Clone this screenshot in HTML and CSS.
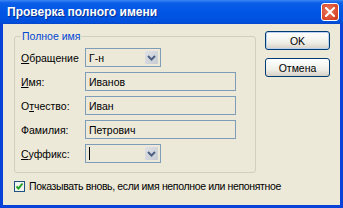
FILE: index.html
```html
<!DOCTYPE html>
<html lang="ru">
<head>
<meta charset="utf-8">
<title>Проверка полного имени</title>
<link rel="stylesheet" href="styles.css">
</head>
<body>
<div class="window">
  <div class="titlebar">
    <span class="title">Проверка полного имени</span>
    <span class="close">
      <svg width="10" height="10" viewBox="0 0 10 10"><path d="M1 1 L9 9 M9 1 L1 9" stroke="#fff" stroke-width="2" stroke-linecap="square"/></svg>
    </span>
  </div>
  <div class="body">
    <div class="main">
      <fieldset class="group">
        <legend class="legend">Полное имя</legend>
        <div class="rows">
          <div class="row">
            <span class="label"><u>О</u>бращение</span>
            <div class="combo"><span class="value">Г-н</span><span class="drop"><svg width="9" height="6" viewBox="0 0 9 6"><path d="M1 1 L4.5 4.5 L8 1" fill="none" stroke="#4d6185" stroke-width="2"/></svg></span></div>
          </div>
          <div class="row">
            <span class="label"><u>И</u>мя:</span>
            <div class="textbox">Иванов</div>
          </div>
          <div class="row">
            <span class="label">О<u>т</u>чество:</span>
            <div class="textbox">Иван</div>
          </div>
          <div class="row">
            <span class="label">Фамилия:</span>
            <div class="textbox">Петрович</div>
          </div>
          <div class="row">
            <span class="label"><u>С</u>уффикс:</span>
            <div class="combo"><span class="value"><span class="caret"></span></span><span class="drop"><svg width="9" height="6" viewBox="0 0 9 6"><path d="M1 1 L4.5 4.5 L8 1" fill="none" stroke="#4d6185" stroke-width="2"/></svg></span></div>
          </div>
        </div>
      </fieldset>
      <div class="buttons">
        <button class="btn btn-default">OK</button>
        <button class="btn">Отмена</button>
      </div>
    </div>
    <label class="check">
      <span class="box"><svg width="9" height="9" viewBox="0 0 9 9"><path d="M1.5 4.5 L3.5 6.5 L7.5 1.5" fill="none" stroke="#21a121" stroke-width="2"/></svg></span>
      <span class="check-text">Показывать вновь, если имя неполное или непонятное</span>
    </label>
  </div>
</div>
</body>
</html>
```

FILE: styles.css
```css
html, body {
  margin: 0;
  padding: 0;
}
body {
  width: 343px;
  height: 208px;
  overflow: hidden;
  font-family: "Liberation Sans", Arial, sans-serif;
  font-size: 10.5px;
  color: #000;
}
.window {
  width: 343px;
  height: 208px;
  display: flex;
  flex-direction: column;
  background: #0842d8;
  box-sizing: border-box;
}
.titlebar {
  height: 24px;
  flex: none;
  display: flex;
  align-items: center;
  justify-content: space-between;
  padding: 0 4px 0 7px;
  background: linear-gradient(#3b86f5 0px, #0a5ee8 3px, #0055e5 12px, #0050de 22px, #0746c8 24px);
}
.title {
  color: #fff;
  font-weight: bold;
  font-size: 12px;
  text-shadow: 1px 1px 0 #0a2f8f;
}
.close {
  width: 18px;
  height: 18px;
  box-sizing: border-box;
  border: 1px solid #fff;
  border-radius: 3px;
  background: radial-gradient(circle at 40% 40%, #ec7a5c, #d8472a 70%, #c03a20);
  display: flex;
  align-items: center;
  justify-content: center;
}
.body {
  flex: 1;
  margin: 0 3px 3px 3px;
  background: #ece9d8;
  padding: 6px 0 0 11px;
  display: flex;
  flex-direction: column;
}
.main {
  display: flex;
  align-items: flex-start;
}
.group {
  margin: 0;
  width: 242px;
  box-sizing: border-box;
  border: 1px solid #d0d0bf;
  border-radius: 3px;
  padding: 5px 0 9px 6px;
}
.legend {
  color: #0046d5;
  padding: 0 1px;
  margin-left: 0;
  line-height: 13px;
}
.rows {
  display: flex;
  flex-direction: column;
  gap: 5px;
}
.row {
  display: flex;
  align-items: center;
  height: 19px;
}
.label {
  width: 64px;
  flex: none;
}
.label u {
  text-decoration: underline;
}
.textbox {
  width: 151px;
  height: 19px;
  box-sizing: border-box;
  border: 1px solid #7f9db9;
  background: #ece9d8;
  padding-left: 3px;
  display: flex;
  align-items: center;
}
.combo {
  width: 76px;
  height: 19px;
  box-sizing: border-box;
  border: 1px solid #7f9db9;
  background: #ece9d8;
  display: flex;
  align-items: center;
  justify-content: space-between;
  padding: 0 2px 0 3px;
}
.value {
  display: flex;
  align-items: center;
}
.caret {
  width: 1px;
  height: 13px;
  background: #000;
}
.drop {
  width: 13px;
  height: 13px;
  background: linear-gradient(135deg, #dfe1e6, #c6cbd3);
  border-radius: 1px;
  display: flex;
  align-items: center;
  justify-content: center;
}
.buttons {
  display: flex;
  flex-direction: column;
  gap: 8px;
  margin-left: 9px;
  margin-top: 1px;
}
.btn {
  width: 65px;
  height: 19px;
  box-sizing: border-box;
  border: 1px solid #003c74;
  border-radius: 3px;
  background: linear-gradient(#ffffff, #f0f0ea 60%, #d6d0c5);
  font-family: "Liberation Sans", Arial, sans-serif;
  font-size: 10.5px;
  color: #000;
  padding: 0;
}
.btn-default {
  box-shadow: inset 0 0 0 1px #bcd0f0;
}
.check {
  display: flex;
  align-items: center;
  gap: 4px;
  margin-top: 7px;
  margin-left: 0;
}
.check-text {
  letter-spacing: -0.35px;
}
.box {
  width: 11px;
  height: 11px;
  box-sizing: border-box;
  border: 1px solid #1c5180;
  background: #f4f4ee;
  display: flex;
  align-items: center;
  justify-content: center;
}
```
